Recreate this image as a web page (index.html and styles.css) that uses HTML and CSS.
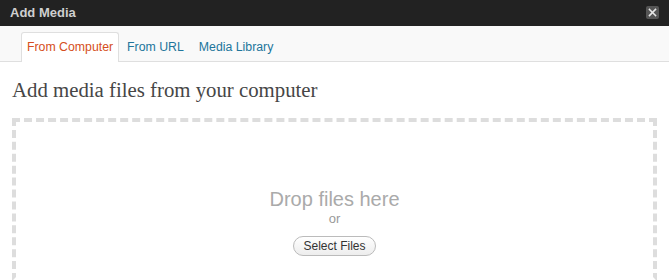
FILE: index.html
```html
<!DOCTYPE html>
<html>
<head>
<meta charset="utf-8">
<link rel="stylesheet" href="styles.css">
</head>
<body>
<div class="titlebar">
  <span class="title">Add Media</span>
  <span class="close"><svg width="13" height="13" viewBox="0 0 13 13"><path d="M3.5 3.5 L9.5 9.5 M9.5 3.5 L3.5 9.5" stroke="#e6e6e6" stroke-width="1.6" stroke-linecap="square"/></svg></span>
</div>
<div class="tabs">
  <a class="tab active">From Computer</a>
  <a class="tab">From URL</a>
  <a class="tab">Media Library</a>
</div>
<div class="content">
  <h3 class="heading">Add media files from your computer</h3>
  <div class="dropzone">
    <div class="drop-text">Drop files here</div>
    <div class="or">or</div>
    <button class="select">Select Files</button>
  </div>
</div>
</body>
</html>
```

FILE: styles.css
```css
* { box-sizing: border-box; }
html, body { margin: 0; padding: 0; background: #fff; overflow: hidden; }
body { font-family: "Liberation Sans", Arial, sans-serif; width: 669px; height: 280px; }

.titlebar {
  height: 26px;
  background: #222;
  display: flex;
  align-items: center;
  justify-content: space-between;
  padding: 0 10px;
}
.title {
  color: #cfcfcf;
  font-weight: bold;
  font-size: 13px;
  line-height: 26px;
}
.close {
  width: 13px;
  height: 13px;
  background: #555;
  border-radius: 2px;
  display: flex;
  margin-top: -1px;
}

.tabs {
  height: 36px;
  background: #f9f9f9;
  border-bottom: 1px solid #dfdfdf;
  padding: 6px 0 0 21px;
  display: flex;
  gap: 1px;
}
.tab {
  font-size: 12.3px;
  line-height: 28px;
  height: 30px;
  padding: 0 5px;
  border: 1px solid transparent;
  border-bottom: none;
  color: #21759b;
  border-radius: 3px 3px 0 0;
}
.tab + .tab { padding: 0 6px; }
.tab.active {
  background: #fff;
  border-color: #dfdfdf;
  color: #d54e21;
}

.content { padding: 0 12px; }
.heading {
  margin: 0;
  padding-top: 15px;
  font-family: "Liberation Serif", Georgia, serif;
  font-weight: normal;
  font-size: 20.8px;
  line-height: 26px;
  color: #464646;
}
.dropzone {
  margin-top: 15px;
  border: 4px dashed #ddd;
  border-bottom-color: transparent;
  height: 163px;
  display: flex;
  flex-direction: column;
  align-items: center;
  padding-top: 66px;
}
.drop-text {
  font-size: 20px;
  line-height: 23px;
  color: #aaa;
}
.or {
  font-size: 13px;
  line-height: 16px;
  color: #999;
}
.select {
  margin-top: 9px;
  font-family: "Liberation Sans", Arial, sans-serif;
  font-size: 12px;
  color: #333;
  height: 20px;
  padding: 0 9px;
  border: 1px solid #bbb;
  border-radius: 11px;
  background: linear-gradient(#fff, #ededed);
  line-height: 18px;
}
```
